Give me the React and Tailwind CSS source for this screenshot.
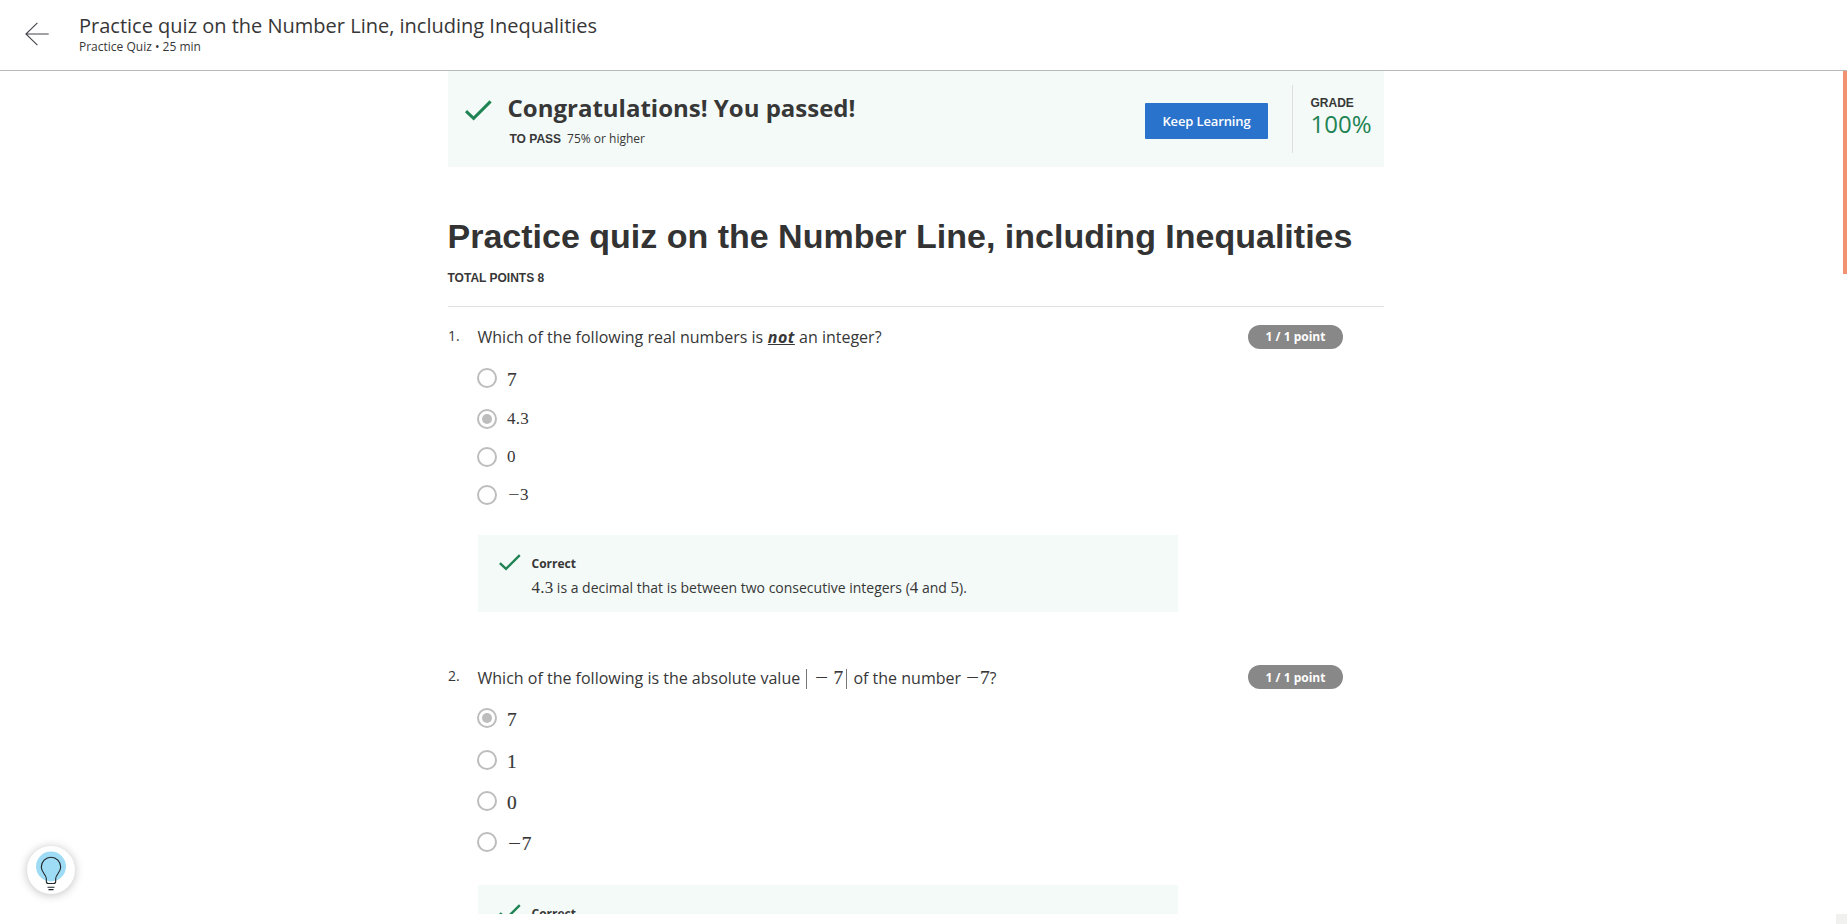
import React from "react";

function Check({ className }) {
  return (
    <svg className={className} viewBox="0 0 27 21" fill="none" stroke="#1f8354" strokeWidth="3">
      <path d="M1 11.2 L8.6 18.3 L25.6 1.4" />
    </svg>
  );
}

/* Math set in a serif face; operators get their own side bearings. */
function MathText({ value, size }) {
  const big = size === "lg";
  return (
    <span
      className={
        "inline-flex items-baseline whitespace-pre font-['Liberation_Serif',serif] " +
        (big ? "text-[19.4px] leading-[20px] [-webkit-text-stroke:0.2px_#373737]" : "text-[17px] leading-[17px]")
      }
    >
      {value.split("").map((c, i) => {
        if (c === "−") return <span key={i} className="inline-flex w-[0.76em] justify-center [-webkit-text-stroke:0]"><span className="scale-x-120">−</span></span>;
        if (c === ".") return <span key={i} className="inline-flex w-[0.278em] justify-center">.</span>;
        return <span key={i} className="inline-flex w-[0.5em] justify-center">{c}</span>;
      })}
    </span>
  );
}

function Bar({ className }) {
  return <span className={"inline-block h-[20px] w-px bg-[#777] align-[-5px] " + className} />;
}

function Option({ value, size, checked, className }) {
  return (
    <div className={"flex h-5 items-center " + className}>
      <span className="flex size-5 shrink-0 items-center justify-center rounded-full border-2 border-[#bdbdbd] bg-white">
        {checked && <span className="size-2.5 rounded-full bg-[#bdbdbd]" />}
      </span>
      <span className={"ml-2.5 flex " + (size === "lg" ? "mt-[3px]" : "-mt-px")}>
        <MathText value={value} size={size} />
      </span>
    </div>
  );
}

function Points({ className = "" }) {
  return (
    <span className={"mr-[41px] flex h-6 w-[95px] shrink-0 items-center justify-center rounded-full bg-[#888888] text-[12px] font-bold text-white " + className}>
      1 / 1 point
    </span>
  );
}

function Feedback({ children }) {
  return (
    <div className="ml-[30px] flex h-[77px] w-[700px] bg-[#f3faf8]">
      <Check className="ml-[21px] mt-[19px] h-[17px] w-[22px] shrink-0" />
      <div className="ml-[10.5px] pt-[19px]">
        <div className="text-[12px] leading-[20px] font-bold">Correct</div>
        <p className="h-[28px] text-[14px] leading-[28px]">{children}</p>
      </div>
    </div>
  );
}

export default function App() {
  return (
    <div className="relative flex h-[924px] w-full flex-col overflow-hidden bg-white font-['Open_Sans',sans-serif] text-[#373737]">
      <header className="flex h-[71px] shrink-0 border-b border-[#b9b9b9] bg-white">
        <svg className="mt-[22px] ml-[25px] h-6 w-6 shrink-0" viewBox="0 0 24 24" fill="none" stroke="#44444c" strokeWidth="1.1">
          <path d="M12.4 0.8 L0.9 12 L12.4 23.2 M0.9 12 H23.7" />
        </svg>
        <div className="ml-[30px] pt-3">
          <h1 className="text-[20px] leading-[28px]">Practice quiz on the Number Line, including Inequalities</h1>
          <p className="text-[12px] leading-[14px]">Practice Quiz • 25 min</p>
        </div>
      </header>

      <div className="flex h-[843px] shrink-0 justify-between overflow-hidden">
        <main className="ml-[448px] w-[936px]">
          <section className="flex h-24 bg-[#f3faf8]">
            <Check className="mt-[29px] ml-[16.5px] h-[21px] w-[27px] shrink-0" />
            <div className="ml-4 pt-[17px]">
              <h2 className="text-[24px] leading-[40px] font-bold">Congratulations! You passed!</h2>
              <p className="mt-px ml-0.5 flex items-baseline gap-[6px] text-[12px] leading-[20px]">
                <span className="font-['Liberation_Sans',sans-serif] font-bold">TO PASS</span>
                <span>75% or higher</span>
              </p>
            </div>
            <div className="ml-auto flex">
              <button className="mt-8 mr-6 flex h-9 w-[123px] items-center justify-center rounded-[1px] bg-[#2a73cc] pt-0.5 text-[13px] font-semibold tracking-[-0.01em] text-white">
                Keep Learning
              </button>
              <div className="mt-[14px] h-[68px] w-[92px] border-l border-[#dcdfde] pt-[10px] pl-[17.5px]">
                <div className="font-['Liberation_Sans',sans-serif] text-[12px] leading-[16px] font-bold">GRADE</div>
                <div className="-mt-px text-[24px] leading-[28px] text-[#1f8354]">100%</div>
              </div>
            </div>
          </section>

          <h2 className="mt-[47px] -ml-[0.5px] font-['Liberation_Sans',sans-serif] text-[34px] leading-[44px] font-bold whitespace-nowrap text-[#333]">
            Practice quiz on the Number Line, including Inequalities
          </h2>
          <p className="mt-[10px] -ml-[0.5px] font-['Liberation_Sans',sans-serif] text-[12px] leading-[20px] font-bold">TOTAL POINTS 8</p>
          <div className="mt-[18px] h-px bg-[#e1e1e1]" />

          <section>
            <div className="mt-[18px] flex h-6">
              <span className="w-[29.5px] text-[14px] leading-[22px]">1.</span>
              <p className="flex-1 text-[16px] leading-[24px]">
                Which of the following real numbers is <b className="ml-[0.5px] tracking-[0.03em]"><i><u>not</u></i></b> an integer?
              </p>
              <Points />
            </div>
            <div className="ml-[29px] flex flex-col">
              <Option value="7" size="lg" className="mt-[19px]" />
              <Option value="4.3" checked className="mt-[21px]" />
              <Option value="0" className="mt-[18px]" />
              <Option value="−3" className="mt-[18px]" />
            </div>
            <div className="mt-[30px]">
              <Feedback>
                <MathText value="4.3" /> is a decimal that is between two consecutive integers (<MathText value="4" /> and <MathText value="5" />).
              </Feedback>
            </div>
          </section>

          <section>
            <div className="mt-[53px] flex h-6">
              <span className="w-[29.5px] text-[14px] leading-[22px]">2.</span>
              <p className="mt-px h-6 flex-1 text-[16px] leading-[24px]">
                Which of the following is the absolute value <Bar className="ml-[1.5px] mr-[7px]" />
                <MathText value="−" size="lg" />
                <span className="ml-[5px]"><MathText value="7" size="lg" /></span>
                <Bar className="mx-[2.5px]" /> of the number <MathText value="−7" size="lg" />?
              </p>
              <Points className="pt-px" />
            </div>
            <div className="ml-[29px] flex flex-col">
              <Option value="7" size="lg" checked className="mt-[19px]" />
              <Option value="1" size="lg" className="mt-[22px]" />
              <Option value="0" size="lg" className="mt-[21px]" />
              <Option value="−7" size="lg" className="mt-[21px]" />
            </div>
            <div className="mt-[33px]">
              <Feedback />
            </div>
          </section>
        </main>
        <div className="h-[203px] w-1 bg-[#f19270]" />
      </div>

      <footer className="flex h-[10px] shrink-0 justify-end bg-white">
        <div className="w-[11px] bg-[#f1f1f0]" />
      </footer>

      <button className="absolute top-[846px] left-[27px] flex size-12 items-center justify-center rounded-full bg-white shadow-[0_1px_10px_rgba(0,0,0,0.25)]">
        <svg className="size-12" viewBox="0 0 48 48" fill="none" stroke="#1f2428" strokeWidth="1.1">
          <circle cx="24" cy="20.5" r="15" fill="#9edcf5" stroke="none" />
          <path d="M19.3 32.5 C19.3 28.5 14.3 26.5 14.3 21 A9.7 9.7 0 0 1 33.7 21 C33.7 26.5 28.7 28.5 28.7 32.5 V35.2 Q28.7 37.5 26.4 37.5 H21.6 Q19.3 37.5 19.3 35.2 Z" />
          <path d="M20.5 41.3 H27.5 M21.5 43.6 H26.5" />
        </svg>
      </button>
    </div>
  );
}
